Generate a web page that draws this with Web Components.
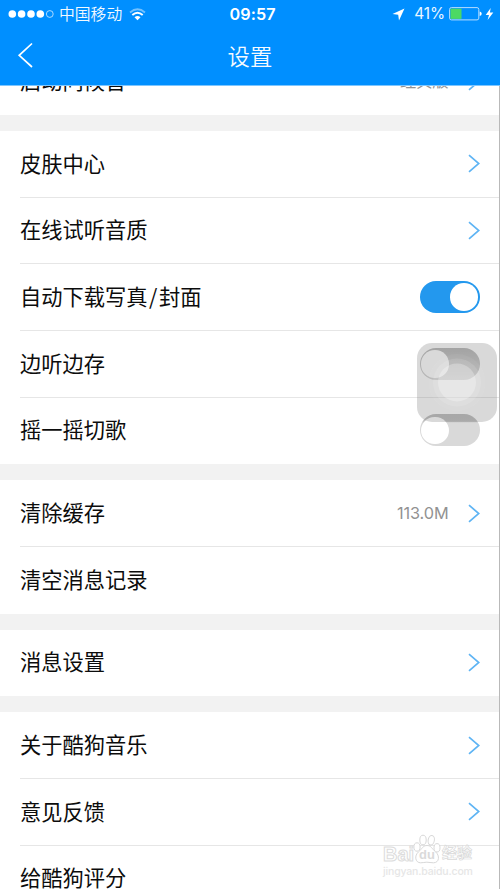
<!DOCTYPE html>
<html lang="zh-CN"><head><meta charset="utf-8"><title>设置</title>
<style>
html,body{margin:0;height:889px;overflow:hidden;background:#fff}
body{font-family:"Noto Sans CJK SC",sans-serif}
</style></head><body>
<settings-screen></settings-screen>
<script>
const define=(name,html,setup)=>customElements.define(name,class extends HTMLElement{
  constructor(){super();const r=this.attachShadow({mode:'open'});r.innerHTML=html;if(setup)setup(this,r);}
});
define('status-bar',`<style>
:host{display:flex;align-items:center;height:28px;padding:0 6px 0 8px;color:#fff;box-sizing:border-box}
.side{flex:1;display:flex;align-items:center;height:28px}.r{justify-content:flex-end}
.carrier{font-size:15.8px;line-height:28px;font-weight:350;margin-left:5px;opacity:.95}
.time{font:600 16.2px/28px Inter,sans-serif;letter-spacing:.1px;padding-left:3px}
.pct{font:400 15.4px/28px Inter,sans-serif;letter-spacing:-.1px;margin-left:9px;margin-right:4px;opacity:.92}
svg{display:block;flex:none}
</style>
<div class="side"><svg width="46" height="10" viewBox="0 0 46 10"><g fill="#fff"><circle cx="4.3" cy="5" r="3.8"/><circle cx="13.6" cy="5" r="3.8"/><circle cx="23" cy="5" r="3.8"/><circle cx="32.3" cy="5" r="3.8"/></g><circle cx="41.8" cy="5" r="3.4" fill="none" stroke="#d4ebff" stroke-width=".8"/></svg>
<span class="carrier">中国移动</span>
<svg style="margin-left:7px" width="17" height="13" viewBox="0 0 17 13" fill="none"><path d="M1 4.5Q8.5-2 16 4.5" stroke="#fff" stroke-opacity=".45" stroke-width="1.7"/><path d="M3.3 7Q8.5 2.5 13.7 7" stroke="#fff" stroke-width="2"/><path d="M5.5 9.2Q8.5 6.6 11.5 9.2L8.5 12.3Z" fill="#fff"/></svg></div>
<span class="time">09:57</span>
<div class="side r"><svg width="13" height="13" viewBox="0 0 13 13"><path d="M12.5.5 7 12.5 6.2 6.8.5 6Z" fill="#fff"/></svg>
<span class="pct">41%</span>
<svg width="33" height="14" viewBox="0 0 33 14"><rect x=".6" y=".6" width="29.2" height="12.3" rx="1.8" fill="none" stroke="#b5dcff" stroke-width="1"/><rect x="1.5" y="1.6" width="11" height="10.3" fill="#4cd964"/><path d="M30.7 4.5q2 .3 2 2.3t-2 2.3Z" fill="#fff"/></svg>
<svg style="margin-left:3px" width="9" height="12" viewBox="0 0 9 12"><path d="M5.7 0 .7 7H4L2.6 12 8.3 4.6H4.9Z" fill="#fff"/></svg></div>`);
define('nav-bar',`<style>
:host{display:grid;grid-template-columns:1fr auto 1fr;align-items:center;height:57px;color:#fff}
svg{margin:-3px 0 0 17px;display:block}h1{margin:0;font-size:22.4px;line-height:55px;padding-bottom:2px;font-weight:350;opacity:.96}
</style><svg width="17" height="28" viewBox="0 0 17 28" fill="none" stroke="#fff" stroke-width="1.7"><path d="M15 2.5 2.2 14.3 15 26"/></svg><h1><slot></slot></h1>`);
define('chevron-right',`<style>:host{display:block;width:12px;height:19px}svg{display:block}</style>
<svg width="12" height="19" viewBox="0 0 12 19" fill="none" stroke="#5eb4f4" stroke-width="1.7"><path d="M1 1.2 10.8 9.5 1 17.8"/></svg>`);
define('toggle-switch',`<style>
:host{display:flex;box-sizing:border-box;width:60px;height:32px;border-radius:16px;padding:2.2px 1.6px;background:linear-gradient(#bababa 0,#bebebe 22%,#d9d9d9 28%)}
:host([shaded]){background:linear-gradient(#b5b5b5,#d3d3d3)}
:host([on]){background:#2398ee;justify-content:flex-end}
i{width:27.6px;height:27.6px;border-radius:50%;background:#fff}
</style><i></i>`);
define('settings-group',`<style>:host{display:block;margin-bottom:16px;background:#fff}</style><slot></slot>`);
define('settings-row',`<style>
:host{display:flex;align-items:center;box-sizing:border-box;height:66.66px;margin-left:20px;padding-right:19.5px;border-bottom:1.3px solid #e6e6e6;color:#0c0c0c}
:host(:last-of-type){border-bottom-color:transparent}
.label{flex:1;font-size:21.25px;font-weight:400;line-height:60px;padding-bottom:2px;white-space:nowrap}
.value{font:400 16.3px/60px Inter,"Noto Sans CJK SC",sans-serif;color:#929292;margin-right:19px;letter-spacing:-.1px}
::slotted(.slash){padding:0 1.6px}
</style><span class="label"><slot></slot></span><span class="value"></span><slot name="control"></slot>`,
(el,r)=>{const v=r.querySelector('.value');if(el.hasAttribute('value'))v.textContent=el.getAttribute('value');else v.remove();});
define('assistive-button',`<style>
:host{position:absolute;left:417px;top:343px;width:80px;height:79px}svg{display:block}
</style><svg width="80" height="79" viewBox="0 0 80 79"><rect width="80" height="79" rx="15" fill="#777" fill-opacity=".28"/><circle cx="40" cy="39.5" r="28.5" fill="#fff" fill-opacity=".05"/><circle cx="40" cy="39.5" r="24" fill="#fff" fill-opacity=".12"/><circle cx="40" cy="39.5" r="19" fill="#fff" fill-opacity=".28"/></svg>`);
define('page-watermark',`<style>
:host{position:absolute;left:383px;top:834px;width:91px;color:#fff;line-height:1}
.brand{display:flex;align-items:flex-end;height:30px;font:700 20px/20px "Liberation Sans","Noto Sans CJK SC",sans-serif}
.brand>span:first-child{width:30px;-webkit-text-stroke:1px #dcdcdc}
.mark{display:grid;width:28px;height:30px;flex:none}.mark>*{grid-area:1/1}.mark span{font-size:13px;align-self:end;justify-self:center;line-height:18px;color:#dadada}
.cn{font-size:15px;line-height:17px;-webkit-text-stroke:.7px #d8d8d8;margin:0 0 3px 1px;white-space:nowrap}
.url{font:500 10.5px/16px Inter,sans-serif;color:#e6e6e6;white-space:nowrap;letter-spacing:-.16px}
</style><div class="brand"><span>Bai</span><div class="mark"><svg width="28" height="30" viewBox="0 0 28 30" fill="#fff" stroke="#d8d8d8"><ellipse cx="4" cy="13" rx="3.1" ry="4.2"/><ellipse cx="10" cy="6" rx="3.2" ry="4.8"/><ellipse cx="18.2" cy="6.2" rx="3.1" ry="4.8" transform="rotate(10 18 6.5)"/><ellipse cx="24" cy="13.8" rx="3" ry="4.2"/><path d="M14 11.5c-4.2 0-5.2 3.7-8.4 6.3-4.6 3.8-3.4 11 2 11 2.5 0 3.8-.6 6.2-.6s4 .6 6.7.6c5.8 0 6.6-7.2 2-11-3.2-2.6-4.2-6.3-8.5-6.3Z"/></svg><span>du</span></div><span class="cn">经验</span></div><div class="url">jingyan.baidu.com</div>`);
define('settings-screen',`<style>
:host{display:flex;flex-direction:column;position:relative;width:500px;height:889px;overflow:hidden;background:#f2f2f2;box-sizing:border-box}
header{background:#008fff;height:85.5px;flex:none;z-index:1;box-sizing:border-box;border-bottom:1px solid #7dc6ff}
main{flex:1;overflow:hidden;border-right:1px solid #b9b9b9}
.content{margin-top:-37.16px}
</style><header><status-bar></status-bar><nav-bar>设置</nav-bar></header>
<main><div class="content">
<settings-group><settings-row value="经典版">启动问候音<chevron-right slot="control"></chevron-right></settings-row></settings-group>
<settings-group><settings-row>皮肤中心<chevron-right slot="control"></chevron-right></settings-row>
<settings-row>在线试听音质<chevron-right slot="control"></chevron-right></settings-row>
<settings-row>自动下载写真<span class="slash">/</span>封面<toggle-switch slot="control" on></toggle-switch></settings-row>
<settings-row>边听边存<toggle-switch slot="control" shaded></toggle-switch></settings-row>
<settings-row>摇一摇切歌<toggle-switch slot="control"></toggle-switch></settings-row></settings-group>
<settings-group><settings-row value="113.0M">清除缓存<chevron-right slot="control"></chevron-right></settings-row>
<settings-row>清空消息记录</settings-row></settings-group>
<settings-group><settings-row>消息设置<chevron-right slot="control"></chevron-right></settings-row></settings-group>
<settings-group><settings-row>关于酷狗音乐<chevron-right slot="control"></chevron-right></settings-row>
<settings-row>意见反馈<chevron-right slot="control"></chevron-right></settings-row>
<settings-row>给酷狗评分</settings-row></settings-group>
</div></main><assistive-button></assistive-button><page-watermark></page-watermark>`);
</script></body></html>
